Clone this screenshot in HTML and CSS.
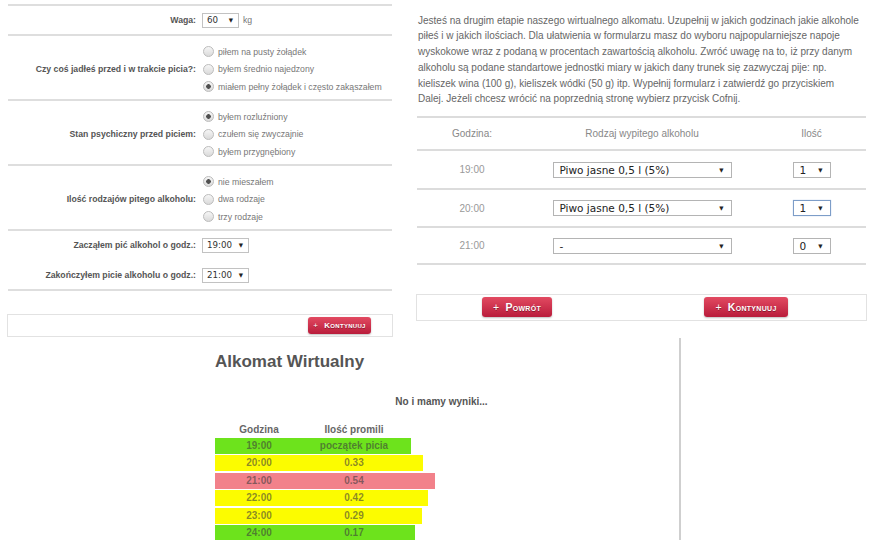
FILE: index.html
```html
<!DOCTYPE html>
<html lang="pl">
<head>
    <meta charset="UTF-8">
    <meta name="viewport" content="width=device-width, initial-scale=1.0">
    <title>Alkomat Wirtualny</title>
    <link rel="stylesheet" href="styles.css">
</head>
<body>
    <div class="top">
        <!-- Etap 1: dane o piciu -->
        <section class="step-one">
            <div class="form">
                <div class="row row-single">
                    <span class="field-label">Waga:</span>
                    <div class="field">
                        <span class="select sel-weight"><span>60</span><span class="arrow">&#9660;</span></span><span class="unit">kg</span>
                    </div>
                </div>

                <div class="row row-radio">
                    <span class="field-label">Czy coś jadłeś przed i w trakcie picia?:</span>
                    <div class="field">
                        <label class="option"><input type="radio" name="food"> piłem na pusty żołądek</label>
                        <label class="option"><input type="radio" name="food"> byłem średnio najedzony</label>
                        <label class="option"><input type="radio" name="food" checked> miałem pełny żołądek i często zakąszałem</label>
                    </div>
                </div>

                <div class="row row-radio">
                    <span class="field-label">Stan psychiczny przed piciem:</span>
                    <div class="field">
                        <label class="option"><input type="radio" name="mood" checked> byłem rozluźniony</label>
                        <label class="option"><input type="radio" name="mood"> czułem się zwyczajnie</label>
                        <label class="option"><input type="radio" name="mood"> byłem przygnębiony</label>
                    </div>
                </div>

                <div class="row row-radio">
                    <span class="field-label">Ilość rodzajów pitego alkoholu:</span>
                    <div class="field">
                        <label class="option"><input type="radio" name="mix" checked> nie mieszałem</label>
                        <label class="option"><input type="radio" name="mix"> dwa rodzaje</label>
                        <label class="option"><input type="radio" name="mix"> trzy rodzaje</label>
                    </div>
                </div>

                <div class="row row-times">
                    <span class="field-label">Zacząłem pić alkohol o godz.:</span>
                    <div class="field">
                        <span class="select sel-time"><span>19:00</span><span class="arrow">&#9660;</span></span>
                    </div>
                    <span class="field-label">Zakończyłem picie alkoholu o godz.:</span>
                    <div class="field">
                        <span class="select sel-time"><span>21:00</span><span class="arrow">&#9660;</span></span>
                    </div>
                </div>
            </div>

            <div class="actions actions-one">
                <button class="btn btn-small">Kontynuuj</button>
            </div>
        </section>

        <!-- Etap 2: wypite alkohole -->
        <section class="step-two">
            <p class="intro">
                Jesteś na drugim etapie naszego wirtualnego alkomatu. Uzupełnij w jakich godzinach jakie alkohole<br>
                piłeś i w jakich ilościach. Dla ułatwienia w formularzu masz do wyboru najpopularniejsze napoje<br>
                wyskokowe wraz z podaną w procentach zawartością alkoholu. Zwróć uwagę na to, iż przy danym<br>
                alkoholu są podane standartowe jednostki miary w jakich dany trunek się zazwyczaj pije: np.<br>
                kieliszek wina (100 g), kieliszek wódki (50 g) itp. Wypełnij formularz i zatwierdź go przyciskiem<br>
                Dalej. Jeżeli chcesz wrócić na poprzednią stronę wybierz przycisk Cofnij.
            </p>

            <div class="drinks">
                <div class="drink-row drink-head">
                    <span>Godzina:</span>
                    <span>Rodzaj wypitego alkoholu</span>
                    <span>Ilość</span>
                </div>
                <div class="drink-row">
                    <span class="hour">19:00</span>
                    <span class="select sel-drink"><span>Piwo jasne 0,5 l (5%)</span><span class="arrow">&#9660;</span></span>
                    <span class="select sel-qty"><span>1</span><span class="arrow">&#9660;</span></span>
                </div>
                <div class="drink-row">
                    <span class="hour">20:00</span>
                    <span class="select sel-drink"><span>Piwo jasne 0,5 l (5%)</span><span class="arrow">&#9660;</span></span>
                    <span class="select sel-qty focused"><span>1</span><span class="arrow">&#9660;</span></span>
                </div>
                <div class="drink-row">
                    <span class="hour">21:00</span>
                    <span class="select sel-drink"><span>-</span><span class="arrow">&#9660;</span></span>
                    <span class="select sel-qty"><span>0</span><span class="arrow">&#9660;</span></span>
                </div>
            </div>

            <div class="actions actions-two">
                <button class="btn btn-back">Powrót</button>
                <button class="btn btn-next">Kontynuuj</button>
            </div>
        </section>
    </div>

    <div class="bottom">
        <!-- Etap 3: wyniki -->
        <section class="result">
            <div class="result-inner">
                <h1 class="result-title">Alkomat Wirtualny</h1>
                <p class="result-lead">No i mamy wyniki...</p>

                <div class="promile">
                    <div class="promile-head">
                        <span class="c-hour">Godzina</span>
                        <span class="c-val">Ilość promili</span>
                    </div>
                    <div class="promile-row green" style="width: 196px"><span class="c-hour">19:00</span><span class="c-val">początek picia</span></div>
                    <div class="promile-row yellow" style="width: 208px"><span class="c-hour">20:00</span><span class="c-val">0.33</span></div>
                    <div class="promile-row red" style="width: 220px"><span class="c-hour">21:00</span><span class="c-val">0.54</span></div>
                    <div class="promile-row yellow" style="width: 213px"><span class="c-hour">22:00</span><span class="c-val">0.42</span></div>
                    <div class="promile-row yellow" style="width: 207px"><span class="c-hour">23:00</span><span class="c-val">0.29</span></div>
                    <div class="promile-row green" style="width: 200px"><span class="c-hour">24:00</span><span class="c-val">0.17</span></div>
                </div>
            </div>
        </section>
    </div>
</body>
</html>
```

FILE: styles.css
```css
/* Reset */
* {
    margin: 0;
    padding: 0;
    box-sizing: border-box;
}

body {
    font-family: "Liberation Sans", Arial, Helvetica, sans-serif;
    background-color: #fff;
    width: 880px;
    height: 540px;
    overflow: hidden;
}

.top {
    display: flex;
    height: 338px;
}

/* Etap 1 */
.step-one {
    width: 400px;
    padding-top: 4px;
}

.form {
    margin: 0 8px;
}

.row {
    display: grid;
    grid-template-columns: 188px 1fr;
    column-gap: 6px;
    align-items: center;
    border-top: 2px solid #dedede;
}

.row:last-child {
    border-bottom: 2px solid #dedede;
}

.row-single {
    height: 30px;
}

.row-radio {
    padding: 7px 0 3.5px;
}

.row-times {
    grid-auto-rows: 28px;
    row-gap: 2px;
}

.field-label {
    text-align: right;
    font-weight: bold;
    font-size: 8.7px;
    color: #555;
}

.field {
    display: flex;
    flex-direction: column;
    align-items: flex-start;
}

.row-single .field {
    flex-direction: row;
    align-items: center;
}

.option {
    display: flex;
    align-items: center;
    gap: 4px;
    height: 17.5px;
    font-size: 8.7px;
    color: #777;
}

.option input {
    appearance: none;
    -webkit-appearance: none;
    width: 11px;
    height: 11px;
    margin-left: 1px;
    border: 1px solid #bcbcbc;
    border-radius: 50%;
    background: linear-gradient(#f6f6f6, #dadada);
}

.option input:checked {
    background: radial-gradient(circle, #505050 0 2px, transparent 2.6px), linear-gradient(#f6f6f6, #dadada);
}

.unit {
    font-size: 8.7px;
    color: #777;
    margin-left: 4px;
}

/* Selecty */
.select {
    display: inline-flex;
    align-items: center;
    justify-content: space-between;
    height: 15px;
    padding: 0 5px 0 4px;
    border: 1px solid #c2c2c2;
    background-color: #fff;
    font-family: "DejaVu Sans", Verdana, sans-serif;
    font-size: 8.7px;
    color: #333;
}

.arrow {
    font-size: 5.5px;
    color: #222;
}

.sel-weight {
    width: 37px;
}

.sel-time {
    width: 47px;
}

/* Przyciski */
.actions {
    display: flex;
    align-items: center;
    border: 1px solid #e2e2e2;
    background-color: #fff;
}

.actions-one {
    margin: 23px 7px 0;
    height: 23px;
    justify-content: flex-end;
    padding-right: 21px;
}

.btn {
    border: none;
    border-radius: 3px;
    background: linear-gradient(#e24a61, #b91c3b);
    color: #fff;
    font-family: inherit;
    font-weight: bold;
    font-variant: small-caps;
    text-shadow: 0 1px 0 rgba(0, 0, 0, 0.35);
    box-shadow: 0 1px 2px rgba(0, 0, 0, 0.25);
    letter-spacing: 0.3px;
}

.btn::before {
    content: "+";
    margin-right: 6px;
    font-weight: normal;
}

.btn-small {
    width: 63px;
    height: 17px;
    font-size: 8px;
}

.btn-back,
.btn-next {
    height: 20px;
    font-size: 10.5px;
}

.btn-back {
    width: 70px;
}

.btn-next {
    width: 84px;
}

/* Etap 2 */
.step-two {
    width: 480px;
    padding: 0 14px 0 17px;
}

.intro {
    padding: 12.5px 0 0 1px;
    font-size: 10px;
    line-height: 15.8px;
    color: #666;
    white-space: nowrap;
}

.drinks {
    margin-top: 9px;
}

.drink-row {
    display: grid;
    grid-template-columns: 110px 230px 109px;
    align-items: center;
    justify-items: center;
    height: 38.5px;
    border-top: 2px solid #dcdcdc;
    font-size: 10px;
    color: #999;
}

.drink-row:last-child {
    border-bottom: 2px solid #dcdcdc;
}

.drink-head {
    height: 33px;
    color: #888;
}

.sel-drink,
.sel-qty {
    height: 16px;
    font-size: 10.5px;
    color: #222;
    padding: 0 7px 0 6px;
    border-color: #b4b4b4;
}

.sel-drink {
    width: 179px;
}

.sel-qty {
    width: 38px;
}

.sel-qty.focused {
    border-color: #7d9dc8;
    box-shadow: 0 0 1px #a9c3e4;
}

.actions-two {
    margin: 29px 0 0 -1px;
    width: 451px;
    height: 27px;
    padding-left: 65px;
    gap: 152px;
}

/* Etap 3 */
.bottom {
    display: flex;
    height: 202px;
}

.result {
    width: 681px;
    padding-left: 215px;
    border-right: 2px solid #cfcfcf;
}

.result-inner {
    width: 453px;
}

.result-title {
    margin-top: 14px;
    font-size: 17px;
    line-height: 20px;
    color: #555;
}

.result-lead {
    margin-top: 24px;
    text-align: center;
    font-size: 10px;
    font-weight: bold;
    line-height: 12px;
    color: #555;
}

.promile {
    margin-top: 15px;
    font-size: 10px;
    font-weight: bold;
}

.promile-head {
    display: flex;
    height: 15px;
    line-height: 14px;
    color: #666;
}

.c-hour {
    width: 88px;
    text-align: center;
}

.c-val {
    width: 102px;
    text-align: center;
}

.promile-row {
    display: flex;
    height: 16px;
    line-height: 16px;
    margin-bottom: 1.4px;
    color: rgba(60, 60, 60, 0.6);
}

.promile-row.green {
    background-color: #6de31c;
}

.promile-row.yellow {
    background-color: #fcfc00;
}

.promile-row.red {
    background-color: #f2818a;
}
```
